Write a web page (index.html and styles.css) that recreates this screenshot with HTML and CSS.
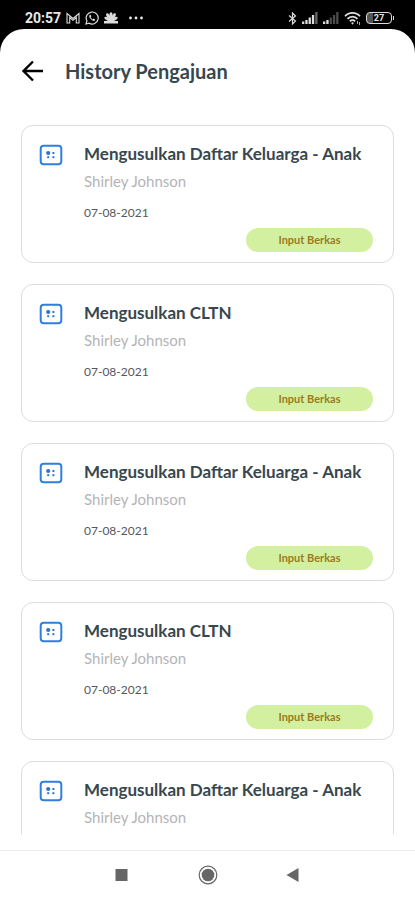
FILE: index.html
```html
<!DOCTYPE html>
<html lang="id">
<head>
<meta charset="utf-8">
<meta name="viewport" content="width=device-width, initial-scale=1">
<title>History Pengajuan</title>
<link rel="stylesheet" href="styles.css">
</head>
<body>
<svg width="0" height="0" class="defs" aria-hidden="true">
  <symbol id="card-icon" viewBox="0 0 24 22">
    <rect x="1.700" y="1.700" width="20.600" height="18.600" rx="3" fill="none" stroke="#2f7fe0" stroke-width="2"/>
    <circle cx="9.200" cy="9" r="2.100" fill="#2b74d0"/>
    <rect x="13.400" y="8" width="2" height="2" fill="#2b74d0"/>
    <rect x="8.200" y="12.200" width="2" height="2" fill="#2b74d0"/>
    <rect x="13.400" y="12.200" width="2" height="2" fill="#2b74d0"/>
  </symbol>
</svg>
<div class="status">
  <div class="status-left">
    <span class="clock">20:57</span>
    <svg width="14" height="12" viewBox="0 0 14 12" fill="none" stroke="#dcdcdc" stroke-width="1.1"><path d="M1 11V1.500L7 6.500l6-5V11h-2.700V5.500L7 8.300 3.700 5.500V11z"/></svg>
    <svg width="14" height="14" viewBox="0 0 14 14"><path d="M1 13l.9-3.200A6 6 0 1 1 4.200 12.200z" fill="none" stroke="#dcdcdc" stroke-width="1.200"/><path d="M4.900 3.800c-1.200.8-.8 2.500.8 4.300s3.400 2.400 4.300 1.200l.1-.9-1.500-.8-.8.8c-1-.4-1.700-1.200-2.100-2.100l.6-.8-.6-1.600z" fill="#dcdcdc"/></svg>
    <svg width="14" height="12" viewBox="0 0 14 12" fill="#dcdcdc"><ellipse cx="7" cy="3.500" rx="1.600" ry="3.300"/><ellipse cx="4.300" cy="4.200" rx="1.600" ry="3.300" transform="rotate(-28 4.300 4.200)"/><ellipse cx="9.700" cy="4.200" rx="1.600" ry="3.300" transform="rotate(28 9.700 4.200)"/><ellipse cx="3" cy="6.800" rx="1.500" ry="3" transform="rotate(-58 3 6.800)"/><ellipse cx="11" cy="6.800" rx="1.500" ry="3" transform="rotate(58 11 6.800)"/><path d="M0 9h14v2.500H0zM5 5h4v5H5z"/></svg>
    <svg class="more" width="14" height="4" viewBox="0 0 14 4" fill="#e8e8e8"><circle cx="1.500" cy="2" r="1.400"/><circle cx="7" cy="2" r="1.400"/><circle cx="12.500" cy="2" r="1.400"/></svg>
  </div>
  <div class="status-right">
    <svg width="9" height="13" viewBox="0 0 9 13" fill="none" stroke="#dcdcdc" stroke-width="1.200"><path d="M1 3.500l6.500 5.500-3 3V1l3 3L1 9.500"/></svg>
    <svg width="16" height="12" viewBox="0 0 16 12" fill="#dcdcdc"><path d="M0 9.500h2.300V12H0zM3.300 8h2.300v4H3.300zM6.600 5.500h2.300V12H6.600zM9.900 3h2.300v9H9.900z"/><path d="M13.200 0h2.300v12h-2.300z" fill="#666"/></svg>
    <svg width="16" height="12" viewBox="0 0 16 12" fill="#4c4c4c"><path d="M0 9.500h2.300V12H0zM3.300 8h2.300v4H3.300z" fill="#dcdcdc"/><path d="M6.600 5.500h2.300V12H6.600zM9.900 3h2.300v9H9.900zM13.200 0h2.300v12h-2.300z"/></svg>
    <svg width="17" height="13" viewBox="0 0 17 13" fill="none" stroke="#e0e0e0" stroke-width="1.700"><path d="M1 4.300C5-.2 12-.2 16 4.300M3.500 6.900c2.700-3 7.300-3 10 0M5.900 9.400c1.500-1.600 3.700-1.600 5.200 0"/><circle cx="8.500" cy="11.300" r="1.100" fill="#e0e0e0" stroke="none"/><path d="M13.500 9v3M15.500 10v3" stroke="#aaa" stroke-width="1"/></svg>
    <span class="battery"><span class="battery-level">27</span></span>
  </div>
</div>
<main class="sheet">
  <header class="bar">
    <button class="back" type="button" aria-label="Kembali">
      <svg width="22" height="22" viewBox="0 0 22 22" fill="none" stroke="#000" stroke-width="2.400"><path d="M22 11H2.500M12 1.500L2.500 11l9.500 9.500"/></svg>
    </button>
    <h1>History Pengajuan</h1>
  </header>
  <div class="list">
    <article class="card">
      <svg class="icon" width="24" height="22"><use href="#card-icon"/></svg>
      <div class="body"><h2>Mengusulkan Daftar Keluarga - Anak</h2><p class="name">Shirley Johnson</p><p class="date">07-08-2021</p><button class="action" type="button">Input Berkas</button></div>
    </article>
    <article class="card">
      <svg class="icon" width="24" height="22"><use href="#card-icon"/></svg>
      <div class="body"><h2>Mengusulkan CLTN</h2><p class="name">Shirley Johnson</p><p class="date">07-08-2021</p><button class="action" type="button">Input Berkas</button></div>
    </article>
    <article class="card">
      <svg class="icon" width="24" height="22"><use href="#card-icon"/></svg>
      <div class="body"><h2>Mengusulkan Daftar Keluarga - Anak</h2><p class="name">Shirley Johnson</p><p class="date">07-08-2021</p><button class="action" type="button">Input Berkas</button></div>
    </article>
    <article class="card">
      <svg class="icon" width="24" height="22"><use href="#card-icon"/></svg>
      <div class="body"><h2>Mengusulkan CLTN</h2><p class="name">Shirley Johnson</p><p class="date">07-08-2021</p><button class="action" type="button">Input Berkas</button></div>
    </article>
    <article class="card">
      <svg class="icon" width="24" height="22"><use href="#card-icon"/></svg>
      <div class="body"><h2>Mengusulkan Daftar Keluarga - Anak</h2><p class="name">Shirley Johnson</p></div>
    </article>
  </div>
</main>
<nav class="nav">
  <button type="button" aria-label="Aplikasi terbaru"><svg width="20" height="20" viewBox="0 0 20 20"><path d="M3.500 4h12v12h-12z" fill="#666"/></svg></button>
  <button type="button" aria-label="Beranda"><svg width="20" height="20" viewBox="0 0 20 20"><circle cx="10" cy="10" r="8.800" fill="none" stroke="#666" stroke-width="1.200"/><circle cx="10" cy="10" r="6.300" fill="#666"/></svg></button>
  <button type="button" aria-label="Kembali"><svg width="20" height="20" viewBox="0 0 20 20"><path d="M14.500 3v14L2.500 10z" fill="#666"/></svg></button>
</nav>
</body>
</html>
```
FILE: styles.css
```css
* {
  box-sizing: border-box;
}

body {
  margin: 0;
  height: 100vh;
  display: flex;
  flex-direction: column;
  background: #000;
  font-family: Lato, "Open Sans", sans-serif;
  color: #37474f;
}

.defs {
  position: absolute;
}

h1,
h2,
p {
  margin: 0;
}

svg {
  display: block;
  flex: none;
}

button {
  padding: 0;
  border: 0;
  background: none;
  font: inherit;
  cursor: pointer;
}

.status {
  display: flex;
  justify-content: space-between;
  height: 29px;
  padding: 8px 23px 0 25px;
}

.status-left,
.status-right {
  display: flex;
  align-items: center;
  height: 20px;
  gap: 5px;
}

.clock {
  font: 700 14px/20px Roboto, sans-serif;
  color: #e8e8e8;
}

.more {
  margin-left: 6px;
}

.battery {
  display: flex;
  width: 26px;
  height: 12px;
  position: relative;
  border: 1px solid #dcdcdc;
  border-radius: 4px;
  background: linear-gradient(to right, #555 27%, #000 27%);
}

.battery::after {
  content: "";
  position: absolute;
  right: -3px;
  top: 3px;
  width: 1px;
  height: 4px;
  background: #dcdcdc;
}

.battery-level {
  flex: 1;
  text-align: center;
  font: 700 9px/10px Roboto, sans-serif;
  color: #e8e8e8;
}

.sheet {
  flex: 1;
  min-height: 0;
  display: flex;
  flex-direction: column;
  padding-bottom: 16px;
  background: #fff;
  border-radius: 24px 24px 0 0;
}

.bar {
  display: flex;
  align-items: center;
  gap: 22px;
  padding: 30px 21px;
}

.bar h1 {
  font-size: 20px;
  line-height: 24px;
  font-weight: 700;
}

.list {
  flex: 1;
  min-height: 0;
  display: flex;
  flex-direction: column;
  gap: 21px;
  padding: 12px 21px 0;
  overflow-y: auto;
  scrollbar-width: none;
}

.card {
  flex: none;
  display: flex;
  gap: 21px;
  min-height: 138px;
  padding: 17px 20px 9px 17px;
  border: 1px solid #dcdcdf;
  border-radius: 12px;
}

.icon {
  margin-top: 1px;
}

.body {
  flex: 1;
  display: flex;
  flex-direction: column;
}

.body h2 {
  font-size: 17px;
  line-height: 22px;
  font-weight: 700;
  white-space: nowrap;
}

.name {
  margin-top: 6px;
  font-size: 15px;
  line-height: 20px;
  color: #b4b4b6;
}

.date {
  margin-top: 13px;
  font-size: 12px;
  line-height: 18px;
  color: #55585c;
}

.action {
  align-self: flex-end;
  width: 127px;
  height: 24px;
  margin-top: 6px;
  border-radius: 12px;
  background: #d2f0a0;
  font-size: 11px;
  line-height: 24px;
  font-weight: 700;
  color: #9c7a20;
}

.nav {
  display: flex;
  justify-content: center;
  gap: 66px;
  height: 50px;
  padding-top: 14px;
  border-top: 1px solid #ececec;
  background: #fff;
}

.nav button {
  width: 20px;
  height: 20px;
}
```
